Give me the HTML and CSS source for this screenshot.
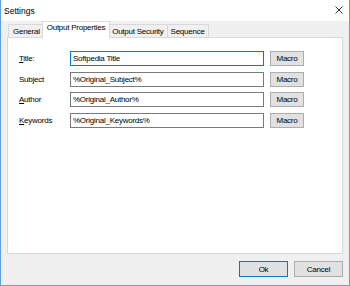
FILE: index.html
```html
<!DOCTYPE html>
<html lang="en">
<head>
    <meta charset="UTF-8">
    <title>Settings</title>
    <link rel="stylesheet" href="styles.css">
</head>
<body>
    <div class="window">
        <div class="titlebar">
            <span class="caption">Settings</span>
            <svg class="close" width="10" height="10" viewBox="0 0 10 10">
                <path d="M1.5 1.5 L8.5 8.5 M8.5 1.5 L1.5 8.5" stroke="#333" stroke-width="1" fill="none"/>
            </svg>
        </div>
        <div class="content">
            <div class="tabs">
                <div class="tab tab-first">General</div>
                <div class="tab active">Output Properties</div>
                <div class="tab">Output Security</div>
                <div class="tab">Sequence</div>
            </div>
            <div class="panel">
                <div class="form">
                    <label class="field-label"><u>T</u>itle:</label>
                    <input class="field focused" type="text" value="Softpedia Title">
                    <button class="btn macro">Macro</button>

                    <label class="field-label">Subject</label>
                    <input class="field" type="text" value="%Original_Subject%">
                    <button class="btn macro">Macro</button>

                    <label class="field-label"><u>A</u>uthor</label>
                    <input class="field" type="text" value="%Original_Author%">
                    <button class="btn macro">Macro</button>

                    <label class="field-label"><u>K</u>eywords</label>
                    <input class="field" type="text" value="%Original_Keywords%">
                    <button class="btn macro">Macro</button>
                </div>
            </div>
            <div class="actions">
                <button class="btn dialog default">Ok</button>
                <button class="btn dialog">Cancel</button>
            </div>
        </div>
    </div>
</body>
</html>
```

FILE: styles.css
```css
body {
    margin: 0;
    padding: 0;
    font-family: "Liberation Sans", Arial, sans-serif;
    font-size: 8px;
    letter-spacing: -0.25px;
    color: #000;
}
.window {
    width: 350px;
    height: 286px;
    box-sizing: border-box;
    border: 1px solid #5ca2e2;
    border-top: none;
    background-color: #f0f0f0;
    display: flex;
    flex-direction: column;
}
.titlebar {
    height: 21px;
    background-color: #fff;
    display: flex;
    align-items: center;
    justify-content: space-between;
    padding: 0 4px 0 3px;
}
.caption {
    font-size: 8.5px;
    letter-spacing: 0;
}
.close {
    margin-right: 1px;
    margin-top: -2px;
}
.content {
    padding: 0 6px;
    display: flex;
    flex-direction: column;
}
.tabs {
    display: flex;
    align-items: flex-end;
    height: 17px;
    margin-bottom: -1px;
    padding-left: 1px;
    position: relative;
    z-index: 1;
}
.tab {
    height: 12px;
    line-height: 14px;
    padding: 0 3px;
    border: 1px solid #d9d9d9;
    border-bottom: none;
    margin-bottom: 1px;
    margin-left: -1px;
    background-color: #f0f0f0;
}
.tab-first {
    margin-left: 0;
    padding: 0 2px 0 4px;
}
.tab.active {
    height: 16px;
    line-height: 12px;
    padding: 0 4px;
    margin-bottom: 0;
    margin-left: -1px;
    margin-right: -1px;
    background-color: #fff;
    position: relative;
}
.panel {
    height: 217px;
    box-sizing: border-box;
    border: 1px solid #d9d9d9;
    background-color: #fff;
    padding: 13px 0 0 11px;
}
.form {
    display: grid;
    grid-template-columns: 45px 194px 34px;
    column-gap: 6px;
    row-gap: 5.6px;
    align-items: center;
}
.field-label {
    line-height: 15px;
}
.field {
    height: 15px;
    box-sizing: border-box;
    border: 1px solid #7a7a7a;
    padding: 0 2px;
    margin: 0;
    font-family: inherit;
    font-size: 8px;
    letter-spacing: -0.25px;
    outline: none;
}
.field.focused {
    border-color: #0078d7;
}
.btn {
    box-sizing: border-box;
    background-color: #e1e1e1;
    border: 1px solid #adadad;
    font-family: inherit;
    font-size: 8px;
    letter-spacing: -0.25px;
    padding: 0;
    margin: 0;
    color: #000;
}
.macro {
    height: 15px;
    width: 34px;
}
.actions {
    display: flex;
    justify-content: flex-end;
    gap: 6px;
    margin-top: 7px;
}
.dialog {
    width: 49px;
    height: 16px;
}
.dialog.default {
    border-color: #0078d7;
}
```
